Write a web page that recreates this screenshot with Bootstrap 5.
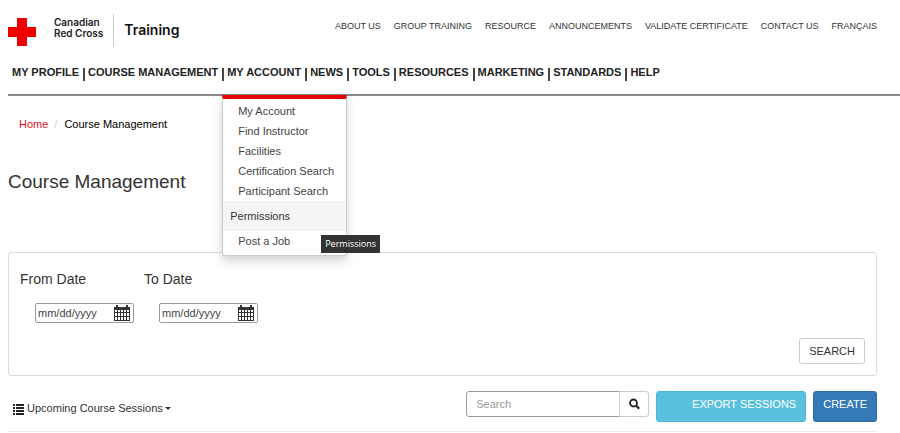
<!DOCTYPE html>
<html lang="en">
<head>
<meta charset="utf-8">
<meta name="viewport" content="width=device-width, initial-scale=1">
<title>Course Management</title>
<link href="https://cdn.jsdelivr.net/npm/bootstrap@5.3.0/dist/css/bootstrap.min.css" rel="stylesheet">
<style>
body{font-family:"Liberation Sans",Arial,sans-serif;font-size:11px;line-height:20px;color:#333;background:#fff}
a{color:inherit;text-decoration:none}
.page-shell{padding-left:8px}
.page-body{padding-right:23px}
.site-head{height:56px;padding-top:14px}
.brand-name{font:600 10px/11px Inter,sans-serif;color:#222;margin-left:18px;padding:3px 10px 8px 0;border-right:1px solid #ccc}
.brand-unit{font:600 14px/32px Inter,sans-serif;color:#111;padding-left:10px}
.top-links{gap:13px;font-size:9px;line-height:24px}
.main-nav{height:40px;padding-top:6px;border-bottom:2px solid #8a8a8a;font-weight:700;color:#222}
.main-nav li{padding:0 5px 0 4px}
.main-nav>li+li::before{content:"";position:absolute;left:-1px;top:6px;width:2px;height:13px;background:#444}
.main-nav .account-menu{display:block;left:-1px;top:33px;min-width:125px;padding:2px 0 4px;border:1px solid #ccc;border-top:4px solid #e60000;border-radius:0 0 3px 3px;box-shadow:0 5px 10px rgba(0,0,0,.18);font-size:11px;color:#444}
.account-menu a{font-size:11px;line-height:20px;padding:0 12px 0 15px;color:#444}
.account-menu a.current{background:#f5f5f5;line-height:30px;padding:0 7px;color:#333}
.hover-tip{left:98px;top:136px;background:#333;color:#fff;font:9px/18px "Open Sans",sans-serif;padding:0 4px;z-index:1001}
.crumbs{padding:18px 11px 0;color:#000}
.crumbs .breadcrumb-item+.breadcrumb-item{padding-left:6px}
.crumbs .breadcrumb-item+.breadcrumb-item::before{padding-right:7px;color:#ccc}
.crumbs a{color:#e8111c}
.page-title{font-size:19px;line-height:24px;font-weight:400;margin:36px 0 58px}
.filter-box{border:1px solid #ddd;border-radius:3px;padding:16px 11px 11px}
.date-group{width:124px}
.date-group label{font-size:14px;line-height:20px}
.date-box{margin:13px 0 0 15px;width:99px;height:20px;border:1px solid #999;border-radius:2px;padding:0 3px 0 2px}
.date-box input{border:0;padding:0;background:none;font-size:11px;line-height:18px;color:#444;width:70px;outline:0}
.date-box input::-webkit-calendar-picker-indicator{display:none}
.date-box input::-webkit-datetime-edit,.date-box input::-webkit-datetime-edit-fields-wrapper{padding:0}
.btn{font-size:11px;line-height:16px;border-radius:3px}
.btn-find{border-color:#ccc;color:#333;padding:4px 9px;margin-top:15px}
.tool-row{padding:15px 0 9px;border-bottom:1px solid #eee}
.sessions-toggle{padding:9px 6px 5px 5px;border:0;color:#333}
.sessions-toggle::after{border-width:3px 3px 0;margin-left:2px;vertical-align:2px}
.search-group{width:183px;height:26px;margin-right:7px}
.search-group .form-control{font-size:11px;line-height:16px;padding:4px 9px;border-color:#999;border-radius:3px}
.search-group .form-control::placeholder{color:#999}
.search-group .btn{border-color:#ccc;padding:4px 9px;width:30px}
.btn-export{background:#5bc0de;border-color:#46b8da;color:#fff;padding:4px 9px 9px;width:150px;margin-right:7px;text-align:right}
.btn-create{background:#337ab7;border-color:#2e6da4;color:#fff;padding:4px 9px 9px}
</style>
<script src="https://cdn.jsdelivr.net/npm/bootstrap@5.3.0/dist/js/bootstrap.bundle.min.js"></script>
</head>
<body>
<div class="page-shell">
<header>
  <div class="site-head page-body d-flex justify-content-between align-items-start">
    <a href="#" class="d-flex align-items-start">
      <svg class="mt-1" width="28" height="28" viewBox="0 0 28 28" aria-hidden="true"><path fill="#ee0000" d="M9 0h10v9h9v10h-9v9H9v-9H0V9h9z"/></svg>
      <span class="brand-name">Canadian<br>Red Cross</span>
      <span class="brand-unit">Training</span>
    </a>
    <nav class="top-links d-flex">
      <a href="#">ABOUT US</a><a href="#">GROUP TRAINING</a><a href="#">RESOURCE</a><a href="#">ANNOUNCEMENTS</a><a href="#">VALIDATE CERTIFICATE</a><a href="#">CONTACT US</a><a href="#">FRANÇAIS</a>
    </nav>
  </div>
  <ul class="main-nav list-unstyled d-flex mb-0">
    <li class="position-relative"><a href="#">MY PROFILE</a></li>
    <li class="position-relative"><a href="#">COURSE MANAGEMENT</a></li>
    <li class="position-relative dropdown"><a href="#">MY ACCOUNT</a>
      <div class="dropdown-menu account-menu show">
        <a class="dropdown-item" href="#">My Account</a>
        <a class="dropdown-item" href="#">Find Instructor</a>
        <a class="dropdown-item" href="#">Facilities</a>
        <a class="dropdown-item" href="#">Certification Search</a>
        <a class="dropdown-item" href="#">Participant Search</a>
        <a class="dropdown-item current" href="#">Permissions</a>
        <a class="dropdown-item" href="#">Post a Job</a>
        <span class="hover-tip position-absolute" role="tooltip">Permissions</span>
      </div>
    </li>
    <li class="position-relative"><a href="#">NEWS</a></li>
    <li class="position-relative"><a href="#">TOOLS</a></li>
    <li class="position-relative"><a href="#">RESOURCES</a></li>
    <li class="position-relative"><a href="#">MARKETING</a></li>
    <li class="position-relative"><a href="#">STANDARDS</a></li>
    <li class="position-relative"><a href="#">HELP</a></li>
  </ul>
</header>
<main class="page-body">
  <nav class="crumbs" aria-label="Breadcrumb">
    <ol class="breadcrumb mb-0">
      <li class="breadcrumb-item"><a href="#">Home</a></li>
      <li class="breadcrumb-item">Course Management</li>
    </ol>
  </nav>
  <h1 class="page-title">Course Management</h1>
  <form class="filter-box">
    <div class="d-flex">
      <div class="date-group">
        <label for="from-date">From Date</label>
        <div class="date-box d-flex align-items-center justify-content-between">
          <input type="date" id="from-date">
          <svg width="16" height="16" viewBox="0 0 16 16" aria-hidden="true"><path fill="#333" d="M2 0h2v2h8V0h2v2h2v14H0V2h2z"/><path fill="#fff" d="M1 5h2v2H1zm3 0h2v2H4zm3 0h2v2H7zm3 0h2v2h-2zm3 0h2v2h-2zM1 8h2v3H1zm3 0h2v3H4zm3 0h2v3H7zm3 0h2v3h-2zm3 0h2v3h-2zM1 12h2v3H1zm3 0h2v3H4zm3 0h2v3H7zm3 0h2v3h-2zm3 0h2v3h-2z"/></svg>
        </div>
      </div>
      <div class="date-group">
        <label for="to-date">To Date</label>
        <div class="date-box d-flex align-items-center justify-content-between">
          <input type="date" id="to-date">
          <svg width="16" height="16" viewBox="0 0 16 16" aria-hidden="true"><path fill="#333" d="M2 0h2v2h8V0h2v2h2v14H0V2h2z"/><path fill="#fff" d="M1 5h2v2H1zm3 0h2v2H4zm3 0h2v2H7zm3 0h2v2h-2zm3 0h2v2h-2zM1 8h2v3H1zm3 0h2v3H4zm3 0h2v3H7zm3 0h2v3h-2zm3 0h2v3h-2zM1 12h2v3H1zm3 0h2v3H4zm3 0h2v3H7zm3 0h2v3h-2zm3 0h2v3h-2z"/></svg>
        </div>
      </div>
    </div>
    <div class="text-end"><button type="button" class="btn btn-find">SEARCH</button></div>
  </form>
  <div class="tool-row d-flex align-items-start">
    <button type="button" class="btn sessions-toggle dropdown-toggle me-auto"><svg width="11" height="11" viewBox="0 0 11 11" aria-hidden="true"><path fill="#222" d="M0 0h2v2H0zm3 0h8v2H3zM0 3h2v2H0zm3 0h8v2H3zM0 6h2v2H0zm3 0h8v2H3zM0 9h2v2H0zm3 0h8v2H3z"/></svg> Upcoming Course Sessions</button>
    <div class="input-group search-group">
      <input type="text" class="form-control" placeholder="Search" aria-label="Search sessions">
      <button type="button" class="btn" aria-label="Search"><svg class="d-block" width="11" height="16" viewBox="0 0 11 16" aria-hidden="true"><circle cx="4.5" cy="7" r="3.5" fill="none" stroke="#222" stroke-width="1.8"/><path stroke="#222" stroke-width="2.2" d="m7 9.5 3.2 3.2"/></svg></button>
    </div>
    <button type="button" class="btn btn-export">EXPORT SESSIONS</button>
    <button type="button" class="btn btn-create">CREATE</button>
  </div>
</main>
</div>
</body>
</html>
